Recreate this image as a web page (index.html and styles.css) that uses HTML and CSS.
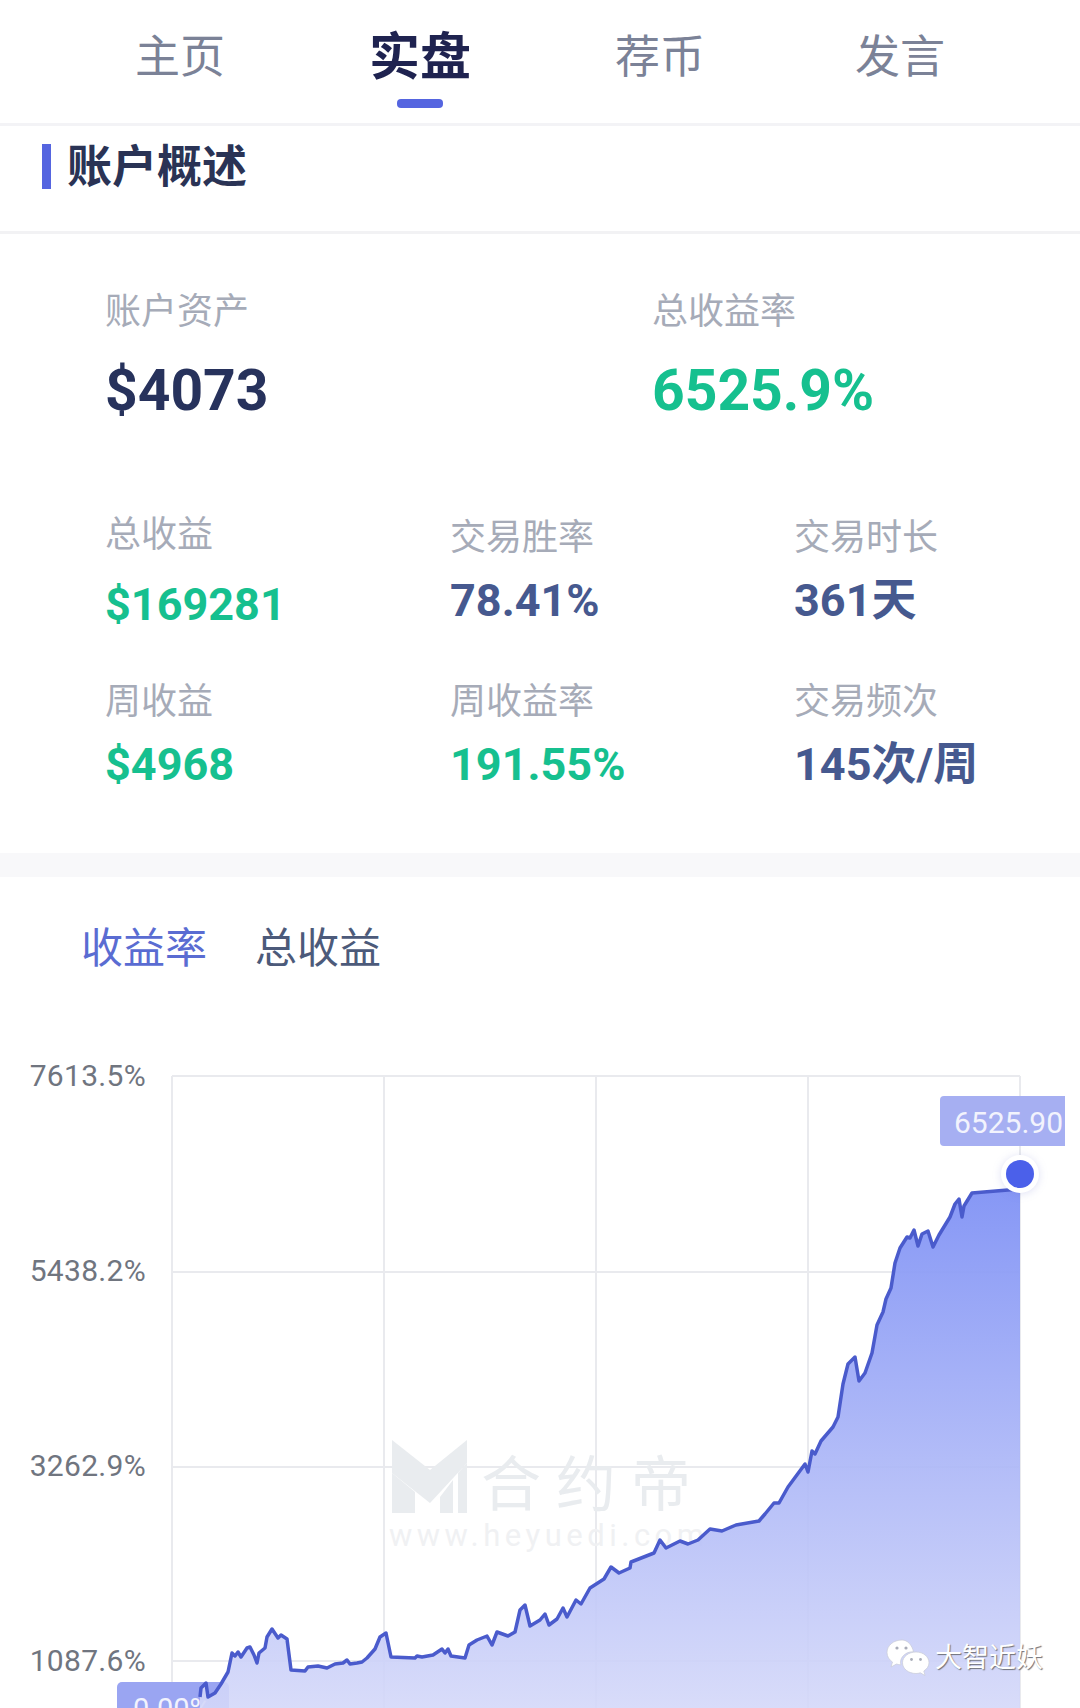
FILE: index.html
```html
<!DOCTYPE html>
<html>
<head>
  <meta charset="UTF-8">
  <title>实盘</title>
  <link rel="stylesheet" href="styles.css">
</head>
<body>
  <div class="page">
    <div class="nav">
      <div class="nav-item">主页</div>
      <div class="nav-item active">实盘</div>
      <div class="nav-item">荐币</div>
      <div class="nav-item">发言</div>
    </div>

    <div class="section-head">
      <h2>账户概述</h2>
    </div>

    <div class="overview">
      <div class="stat-main">
        <div class="stat">
          <div class="label">账户资产</div>
          <div class="big navy">$4073</div>
        </div>
        <div class="stat">
          <div class="label">总收益率</div>
          <div class="big green">6525.9%</div>
        </div>
      </div>
      <div class="stat-grid">
        <div class="stat lead">
          <div class="label">总收益</div>
          <div class="num green">$169281</div>
        </div>
        <div class="stat">
          <div class="label">交易胜率</div>
          <div class="num blue">78.41%</div>
        </div>
        <div class="stat">
          <div class="label">交易时长</div>
          <div class="num blue">361天</div>
        </div>
        <div class="stat">
          <div class="label">周收益</div>
          <div class="num green">$4968</div>
        </div>
        <div class="stat">
          <div class="label">周收益率</div>
          <div class="num green">191.55%</div>
        </div>
        <div class="stat">
          <div class="label">交易频次</div>
          <div class="num blue">145次/周</div>
        </div>
      </div>
    </div>

    <div class="band"></div>

    <div class="chart-tabs">
      <span class="chart-tab active">收益率</span>
      <span class="chart-tab">总收益</span>
    </div>

    <svg class="chart" viewBox="0 1020 1080 688" width="1080" height="688">
      <defs>
        <linearGradient id="areaFill" x1="0" y1="0" x2="0" y2="1">
          <stop offset="0" stop-color="#8092f5" stop-opacity="0.95"/>
          <stop offset="1" stop-color="#d4d8f9" stop-opacity="0.9"/>
        </linearGradient>
      </defs>

      <!-- grid -->
      <g class="grid">
        <path d="M172 1076H1020M172 1272H1020M172 1467H1020M172 1661H1020"/>
        <path d="M172 1076V1708M384 1076V1708M596 1076V1708M808 1076V1708M1020 1076V1708"/>
      </g>

      <!-- watermark -->
      <g class="mark">
        <path d="M392 1440L430 1470 467 1440V1463L430 1503 392 1473Z"/>
        <path d="M392 1473L415 1492V1513H392Z"/>
        <path d="M440 1497L453 1480V1513H440Z"/>
        <path d="M458 1473L467 1463V1513H458Z"/>
        <text class="mark-name" x="481" y="1506">合约帝</text>
        <text class="mark-url" x="389" y="1546">www.heyuedi.com</text>
      </g>

      <!-- axis labels -->
      <text class="axis" x="146" y="1086" text-anchor="end">7613.5%</text>
      <text class="axis" x="146" y="1281" text-anchor="end">5438.2%</text>
      <text class="axis" x="146" y="1476" text-anchor="end">3262.9%</text>
      <text class="axis" x="146" y="1671" text-anchor="end">1087.6%</text>

      <!-- start tag -->
      <rect class="tag" x="117" y="1682" width="112" height="50" rx="5"/>
      <text class="tag-text" x="133" y="1719">0.00%</text>

      <!-- curve -->
      <path class="area" d="M200 1697L201 1688 206 1683 208 1697 215 1693 221 1684 228 1672 232 1653 235 1656 238 1652 241 1657 247 1648 250 1647 254 1655 257 1663 259 1653 265 1648 267 1637 272 1629 278 1638 281 1635 287 1639 291 1670 305 1671 308 1667 318 1666 327 1668 335 1664 343 1663 347 1660 350 1664 357 1663 362 1662 367 1658 375 1649 380 1637 386 1633 391 1657 415 1658 417 1656 422 1657 433 1655 442 1649 445 1653 448 1649 451 1656 465 1658 469 1645 477 1640 487 1636 492 1645 497 1632 508 1636 515 1632 520 1610 525 1605 530 1626 540 1620 545 1614 549 1625 557 1619 563 1608 567 1617 576 1600 581 1604 590 1588 604 1579 611 1567 619 1573 630 1568 631 1562 654 1553 660 1540 666 1548 680 1541 688 1544 698 1540 710 1529 722 1531 736 1525 759 1521 765 1514 774 1503 779 1503 788 1487 805 1464 808 1472 812 1451 815 1454 821 1441 833 1427 838 1417 843 1384 848 1364 855 1357 859 1381 865 1373 872 1353 877 1325 883 1312 886 1299 891 1288 895 1263 900 1248 907 1237 910 1238 914 1230 918 1246 922 1234 928 1231 933 1247 939 1235 950 1217 955 1204 959 1199 962 1217 964 1206 972 1193 1008 1190 1020 1189V1708H200Z"/>
      <path class="line" d="M200 1697L201 1688 206 1683 208 1697 215 1693 221 1684 228 1672 232 1653 235 1656 238 1652 241 1657 247 1648 250 1647 254 1655 257 1663 259 1653 265 1648 267 1637 272 1629 278 1638 281 1635 287 1639 291 1670 305 1671 308 1667 318 1666 327 1668 335 1664 343 1663 347 1660 350 1664 357 1663 362 1662 367 1658 375 1649 380 1637 386 1633 391 1657 415 1658 417 1656 422 1657 433 1655 442 1649 445 1653 448 1649 451 1656 465 1658 469 1645 477 1640 487 1636 492 1645 497 1632 508 1636 515 1632 520 1610 525 1605 530 1626 540 1620 545 1614 549 1625 557 1619 563 1608 567 1617 576 1600 581 1604 590 1588 604 1579 611 1567 619 1573 630 1568 631 1562 654 1553 660 1540 666 1548 680 1541 688 1544 698 1540 710 1529 722 1531 736 1525 759 1521 765 1514 774 1503 779 1503 788 1487 805 1464 808 1472 812 1451 815 1454 821 1441 833 1427 838 1417 843 1384 848 1364 855 1357 859 1381 865 1373 872 1353 877 1325 883 1312 886 1299 891 1288 895 1263 900 1248 907 1237 910 1238 914 1230 918 1246 922 1234 928 1231 933 1247 939 1235 950 1217 955 1204 959 1199 962 1217 964 1206 972 1193 1008 1190 1020 1189"/>

      <!-- end tag and dot -->
      <path class="tag-end" d="M944 1096H1065V1146H944Q940 1146 940 1142V1100Q940 1096 944 1096Z"/>
      <text class="tag-text end" x="954" y="1133">6525.90</text>
      <circle class="dot-halo" cx="1020" cy="1174" r="19"/>
      <circle class="dot" cx="1020" cy="1174" r="14"/>
    </svg>

    <div class="stamp">
      <svg class="stamp-icon" viewBox="0 0 44 38" width="44" height="38">
        <path d="M16 1C7.500 1 1 6.500 1 13.500C1 17.500 3.200 20.800 6.500 23L5 28L10.500 25C12 25.500 13.500 25.800 15 25.900C14.500 24.500 14.300 23 14.700 21.500C16 16 21.500 12.500 27.500 12.800C26 6 21.500 1 16 1Z"/>
        <path d="M30 13C22.500 13 16.500 17.800 16.500 23.800C16.500 29.800 22.500 34.500 30 34.500C31.500 34.500 33 34.300 34.300 33.800L39 36.500L37.800 32C41 30 43 27.100 43 23.800C43 17.800 37.500 13 30 13Z"/>
        <g class="stamp-eyes">
          <circle cx="11" cy="9" r="1.600"/>
          <circle cx="20" cy="9" r="1.600"/>
          <circle cx="25.500" cy="20.500" r="1.400"/>
          <circle cx="34.500" cy="20.500" r="1.400"/>
        </g>
      </svg>
      <span class="stamp-name">大智近妖</span>
    </div>
  </div>
</body>
</html>
```

FILE: styles.css
```css
* {
  box-sizing: border-box;
}

html, body {
  margin: 0;
  padding: 0;
  background: #fff;
}

.page {
  position: relative;
  width: 1080px;
  height: 1708px;
  overflow: hidden;
  font-family: Roboto, "Noto Sans CJK SC", sans-serif;
}

.nav {
  display: flex;
  padding: 0 60px;
  height: 126px;
  border-bottom: 3px solid #f3f3f6;
}

.nav-item {
  position: relative;
  width: 240px;
  padding-top: 28px;
  text-align: center;
  font-size: 45px;
  line-height: 60px;
  color: #7b8297;
}

.nav-item.active {
  font-size: 51px;
  font-weight: 700;
  color: #1f2350;
}

.nav-item.active::after {
  content: "";
  position: absolute;
  left: 97px;
  top: 99px;
  width: 46px;
  height: 9px;
  border-radius: 4px;
  background: #5565e0;
}

.section-head {
  height: 108px;
  padding: 18px 0 0 42px;
  border-bottom: 3px solid #f2f2f4;
}

.section-head h2 {
  margin: 0;
  padding-left: 16px;
  height: 45px;
  border-left: 9px solid #5565e0;
  font-size: 45px;
  line-height: 47px;
  font-weight: 700;
  color: #2a3355;
}

.overview {
  height: 619px;
  padding: 56px 0 0 105px;
}

.stat-main {
  display: flex;
  height: 226px;
}

.stat-main .stat {
  flex: 0 0 547px;
}

.stat-grid {
  display: grid;
  grid-template-columns: 345px 344px 1fr;
  grid-auto-rows: 164px;
}

.label {
  font-size: 36px;
  line-height: 44px;
  color: #a6abb8;
}

.big {
  margin-top: 21px;
  font-size: 57px;
  line-height: 72px;
  font-weight: 700;
}

.num {
  margin-top: 13px;
  font-size: 45px;
  line-height: 56px;
  font-weight: 700;
}

.stat.lead .label {
  margin-top: -3px;
}

.stat.lead .num {
  margin-top: 20px;
}

.navy {
  color: #27325c;
}

.green {
  color: #16c08f;
}

.blue {
  color: #46598f;
}

.band {
  height: 24px;
  background: #f8f8fa;
}

.chart-tabs {
  display: flex;
  gap: 48px;
  height: 143px;
  padding: 44px 0 0 81px;
}

.chart-tab {
  font-size: 42px;
  line-height: 56px;
  color: #4c5a7a;
}

.chart-tab.active {
  color: #5a6cd2;
}

.chart {
  display: block;
}

.grid path {
  fill: none;
  stroke: #e9eaee;
  stroke-width: 2;
}

.mark path {
  fill: #e9ecef;
}

.mark-name {
  font-size: 60px;
  letter-spacing: 15px;
  fill: #e9ecef;
}

.mark-url {
  font-size: 31px;
  letter-spacing: 4.5px;
  fill: #f0f1f3;
}

.axis {
  font-size: 30px;
  letter-spacing: 0.3px;
  fill: #70757f;
}

.tag {
  fill: #9aa5f2;
}

.tag-end {
  fill: #a6aff2;
}

.tag-text {
  font-size: 29px;
  fill: #f2f3fd;
}

.tag-text.end {
  font-size: 30px;
}

.area {
  fill: url(#areaFill);
}

.line {
  fill: none;
  stroke: #4a5bcc;
  stroke-width: 3.5;
  stroke-linejoin: round;
}

.dot-halo {
  fill: #fff;
  filter: drop-shadow(0 1px 4px rgba(90, 100, 200, 0.2));
}

.dot {
  fill: #4b60ea;
}

.stamp {
  position: absolute;
  left: 886px;
  top: 1639px;
  display: flex;
  align-items: center;
  gap: 5px;
}

.stamp-icon path {
  fill: #fff;
  stroke: #c9cbd6;
  stroke-width: 0.7;
}

.stamp-eyes circle {
  fill: #a9acb8;
}

.stamp-name {
  font-size: 27px;
  line-height: 36px;
  color: #fff;
  text-shadow: 1px 1px 1px #6e7078;
}
```
